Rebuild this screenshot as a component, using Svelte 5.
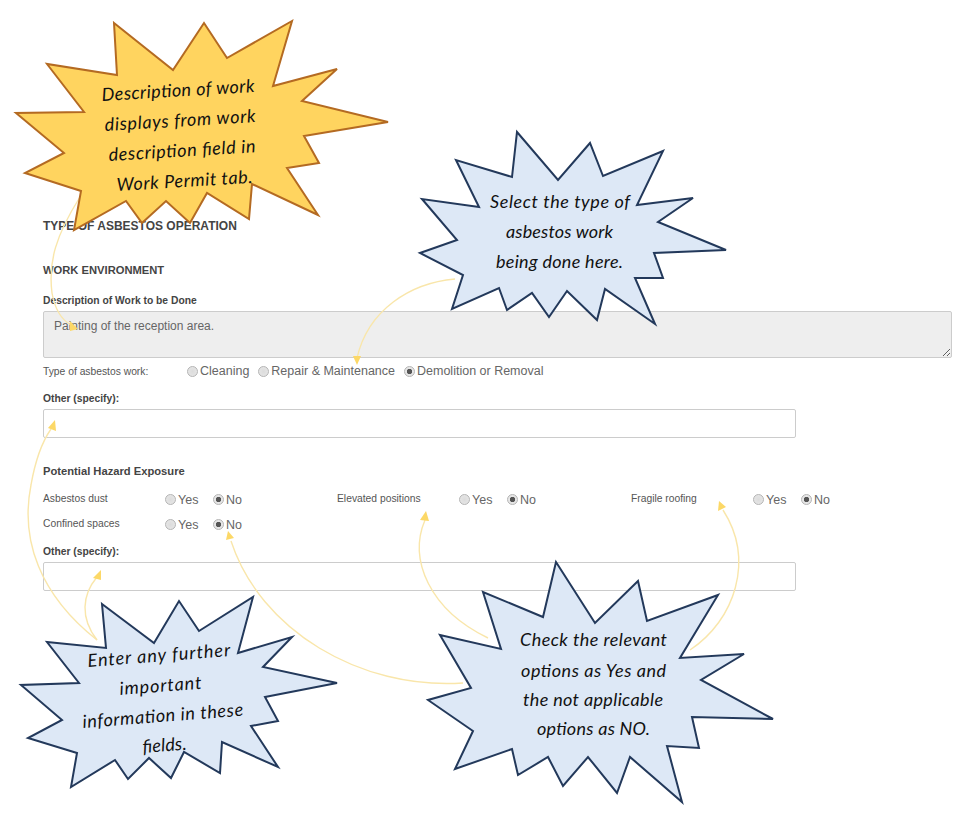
<script>
  const radios = ["Cleaning", "Repair & Maintenance", "Demolition or Removal"];

  const hazards = [
    { name: "Asbestos dust" },
    { name: "Elevated positions" },
    { name: "Fragile roofing" },
    { name: "Confined spaces" }
  ];

  const arrows = [
    { d: "M80 197C56 235 48 262 52 293C55 310 62 320 71 325", head: "70,331 78,329 70,321" },
    { d: "M455 279C410 283 368 310 357 358", head: "353,356 361,356 357,365" },
    { d: "M97 640C40 595 20 540 31 485C35 462 42 442 51 429", head: "48,428 56,431 55,420" },
    { d: "M97 640C80 618 82 595 97 577", head: "93,578 101,580 101,570" },
    { d: "M463 683C360 690 260 630 231 541", head: "226,540 234,538 228,531" },
    { d: "M488 638C430 610 408 560 425 520", head: "420,520 429,521 426,511" },
    { d: "M690 650C735 620 755 560 723 510", head: "718,511 726,507 719,501" }
  ];

  const stars = [
    {
      kind: "gold",
      points: "114,23 173,70 204,23 227,58 292,21 273,86 337,69 302,101 388,122 304,136 319,163 287,168 318,215 252,184 249,219 207,193 190,223 166,201 142,223 126,201 74,230 81,191 25,173 64,153 16,113 84,112 47,64 117,75",
      lines: [
        { t: "Description of work", x: 102, y: 101, w: 153, r: -3.4 },
        { t: "displays from work", x: 105, y: 131, w: 151, r: -3.4 },
        { t: "description field in", x: 109, y: 161, w: 147, r: -3.4 },
        { t: "Work Permit tab.", x: 117, y: 191, w: 136, r: -3.4 }
      ]
    },
    {
      kind: "blue",
      points: "517,132 558,180 590,143 603,176 663,151 637,205 693,198 658,222 726,250 654,253 663,278 635,278 655,324 605,289 597,320 567,291 549,317 532,293 507,310 499,288 452,309 463,275 420,253 457,240 422,199 479,207 456,160 512,177",
      lines: [
        { t: "Select the type of", x: 490, y: 208, w: 140, r: 0 },
        { t: "asbestos work", x: 506, y: 238, w: 107, r: 0 },
        { t: "being done here.", x: 496, y: 268, w: 127, r: 0 }
      ]
    },
    {
      kind: "blue",
      points: "102,604 154,643 179,601 199,631 253,597 238,653 292,637 263,667 337,683 265,697 278,721 251,726 278,767 222,742 220,773 184,752 171,778 149,758 128,779 115,760 71,787 77,753 28,738 62,720 21,685 79,683 47,642 106,648",
      lines: [
        { t: "Enter any further", x: 88, y: 667, w: 143, r: -4.4 },
        { t: "important", x: 120, y: 695, w: 82, r: -4.4 },
        { t: "information in these", x: 83, y: 728, w: 161, r: -4.4 },
        { t: "fields.", x: 143, y: 753, w: 44, r: -4.4 }
      ]
    },
    {
      kind: "blue",
      points: "556,562 595,623 638,581 647,621 718,595 680,658 744,654 701,680 773,719 692,717 699,748 667,746 682,802 630,757 617,793 588,757 563,786 548,757 518,775 512,749 455,769 473,731 428,700 471,688 440,635 501,649 483,592 543,617",
      lines: [
        { t: "Check the relevant", x: 520, y: 646, w: 147, r: 0 },
        { t: "options as Yes and", x: 521, y: 677, w: 145, r: 0 },
        { t: "the not applicable", x: 523, y: 706, w: 140, r: 0 },
        { t: "options as NO.", x: 537, y: 735, w: 113, r: 0 }
      ]
    }
  ];
</script>

<div class="page">
  <form class="form">
    <h2 class="op-title">TYPE OF ASBESTOS OPERATION</h2>
    <h3 class="env-title">WORK ENVIRONMENT</h3>

    <label class="field-label" for="desc">Description of Work to be Done</label>
    <textarea id="desc" class="desc" disabled>Painting of the reception area.</textarea>

    <div class="type-row">
      <span class="small-label type-label">Type of asbestos work:</span>
      {#each radios as r, i}
        <label class="opt type-opt"><input type="radio" name="type" disabled checked={i === 2} />{r}</label>
      {/each}
    </div>

    <label class="field-label other" for="other1">Other (specify):</label>
    <input id="other1" class="text-input" type="text" />

    <h4 class="hazard-title">Potential Hazard Exposure</h4>
    <div class="hazards">
      {#each hazards as h, i}
        <div class="hazard">
          <span class="small-label hazard-name">{h.name}</span>
          <label class="opt yes"><input type="radio" name={"hz" + i} disabled />Yes</label>
          <label class="opt"><input type="radio" name={"hz" + i} disabled checked />No</label>
        </div>
      {/each}
    </div>

    <label class="field-label other2" for="other2">Other (specify):</label>
    <input id="other2" class="text-input" type="text" />
  </form>

  <!-- callouts sit on top of the form -->
  <svg class="overlay" width="976" height="822" viewBox="0 0 976 822">
    {#each arrows as a}
      <path class="arrow" d={a.d} />
      <polygon class="head" points={a.head} />
    {/each}
    {#each stars as s}
      <polygon class={"star " + s.kind} points={s.points} />
      {#each s.lines as l}
        <text
          class="note"
          x={l.x}
          y={l.y}
          textLength={l.w}
          transform={`rotate(${l.r} ${l.x} ${l.y})`}>{l.t}</text>
      {/each}
    {/each}
  </svg>
</div>

<style>
  :global(body) {
    margin: 0;
    background: #fff;
  }

  .page {
    position: relative;
    width: 976px;
    height: 822px;
    overflow: hidden;
    font-family: "Liberation Sans", Arial, sans-serif;
    color: #555;
  }

  .form {
    display: flex;
    flex-direction: column;
    align-items: flex-start;
    padding: 219px 25px 0 43px;
  }

  .op-title {
    margin: 0 0 30px;
    font-size: 12px;
    line-height: 14px;
    font-weight: bold;
    color: #444;
  }

  .env-title {
    margin: 0 0 18px;
    font-size: 11.2px;
    line-height: 14px;
    font-weight: bold;
    color: #444;
  }

  .field-label {
    font-size: 10.3px;
    line-height: 12px;
    font-weight: bold;
    color: #444;
  }

  .desc {
    box-sizing: border-box;
    width: 909px;
    height: 47px;
    margin: 4px 0 0;
    padding: 6px 10px;
    border: 1px solid #ccc;
    border-radius: 2px;
    background: #eee;
    font: 12px/16px "Liberation Sans", Arial, sans-serif;
    color: #666;
  }

  .type-row {
    display: flex;
    align-items: center;
    height: 16px;
    margin-top: 5px;
  }

  .small-label {
    font-size: 10.3px;
    color: #555;
  }

  .type-label {
    width: 144px;
  }

  .opt {
    display: flex;
    align-items: center;
    font-size: 12.5px;
    line-height: 16px;
    color: #666;
  }

  .type-opt {
    margin-right: 9px;
  }

  input[type="radio"] {
    appearance: none;
    box-sizing: border-box;
    width: 11px;
    height: 11px;
    margin: 0 2px 0 0;
    border: 1px solid #b4b4b4;
    border-radius: 50%;
    background: radial-gradient(circle, #dcdcdc 0, #e8e8e8 100%);
  }

  input[type="radio"]:checked {
    background: radial-gradient(circle, #555 0, #555 2.4px, #e6e6e6 3px);
  }

  .other {
    margin-top: 14px;
  }

  .text-input {
    box-sizing: border-box;
    width: 753px;
    height: 29px;
    margin: 4px 0 0;
    border: 1px solid #ccc;
    border-radius: 2px;
    background: #fff;
  }

  .hazard-title {
    margin: 26px 0 0;
    font-size: 11.2px;
    line-height: 14px;
    font-weight: bold;
    color: #444;
  }

  .hazards {
    display: grid;
    grid-template-columns: repeat(3, 294px);
    grid-auto-rows: 25px;
    margin-top: 9px;
  }

  .hazard {
    display: flex;
    align-items: center;
  }

  .hazard-name {
    width: 122px;
    margin-top: -3px;
  }

  .yes {
    width: 48px;
  }

  .other2 {
    margin-top: 9px;
  }

  .overlay {
    position: absolute;
    top: 0;
    left: 0;
    pointer-events: none;
  }

  .arrow {
    fill: none;
    stroke: #f9e6aa;
    stroke-width: 1.4;
  }

  .head {
    fill: #fcd867;
  }

  .star {
    stroke-width: 2;
    stroke-linejoin: miter;
  }

  .gold {
    fill: #ffd45f;
    stroke: #b46a22;
  }

  .blue {
    fill: #dde8f6;
    stroke: #23395b;
  }

  .note {
    font-family: "Lato", "Open Sans", sans-serif;
    font-style: italic;
    font-size: 18px;
    fill: #111;
  }
</style>
